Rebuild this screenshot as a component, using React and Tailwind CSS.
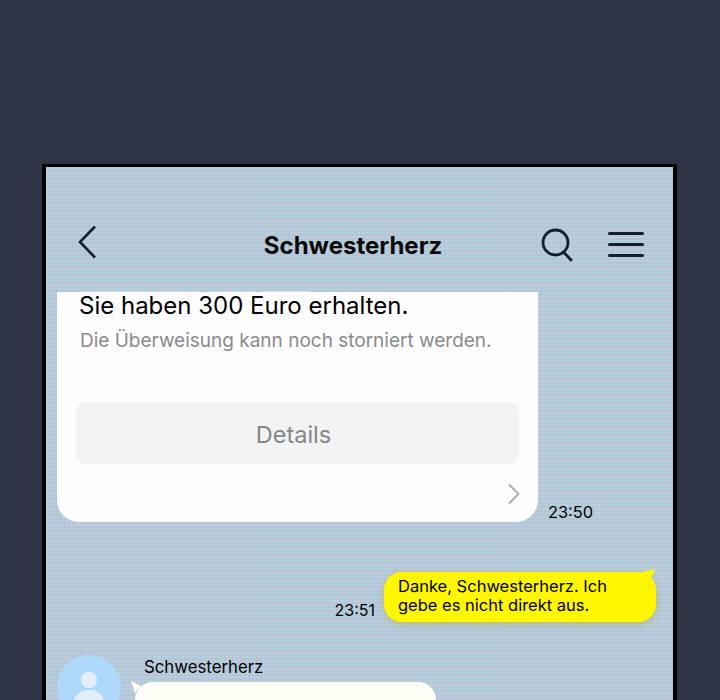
import { ChevronRight } from 'lucide-react'

const font = { fontFamily: 'Inter, "Noto Sans", sans-serif' }

function Header() {
  return (
    <div className="flex h-[125px] items-center pl-[31px] pr-[29px] pt-[30px] text-[#0a0a0a]">
      <svg className="-mt-[6px]" width="20" height="34" viewBox="0 0 20 34" fill="none" stroke="#16202a" strokeWidth="2.6">
        <path d="M18 1.5 L3 17 L18 32.5" />
      </svg>
      <h1 className="flex-1 pl-[68px] pt-[2px] text-center text-[24px] leading-none font-bold">Schwesterherz</h1>
      <svg width="32" height="34" viewBox="0 0 32 34" fill="none" stroke="#12202a" strokeWidth="2.8" strokeLinecap="round">
        <circle cx="14.5" cy="14.5" r="12.5" />
        <path d="M22.5 24 L30 32" />
      </svg>
      <div className="ml-[35px] flex w-[36px] flex-col gap-[8px]">
        <div className="h-[3px] rounded-full bg-[#12202a]" />
        <div className="h-[3px] rounded-full bg-[#12202a]" />
        <div className="h-[3px] rounded-full bg-[#12202a]" />
      </div>
    </div>
  )
}

function TransferCard() {
  return (
    <div className="relative flex items-end pl-[11px]">
      {/* cut-off line of text peeking above the card */}
      <div className="absolute -top-[1px] left-[34px] flex h-[1px] gap-[6px]">
        <div className="w-[120px] bg-white/30" />
        <div className="w-[50px] bg-white/30" />
        <div className="w-[48px] bg-white/50" />
      </div>
      <div className="h-[230px] w-[481px] rounded-b-[22px] bg-[#fdfcfe] px-[19px] text-black">
        <p className="-mt-px pl-[3px] text-[24px] leading-[30px]">Sie haben 300 Euro erhalten.</p>
        <p className="mt-[5px] pl-[4px] text-[19px] leading-[30px] text-[#8b8b8b]">Die Überweisung kann noch storniert werden.</p>
        <div className="mt-[46px] flex h-[62px] items-center justify-center rounded-[10px] bg-[#f4f3f4] pr-[8px] pt-[3px] text-[23.5px] text-[#858585]">
          Details
        </div>
        <div className="mt-[12px] flex justify-end">
          <ChevronRight size={36} strokeWidth={1.3} className="mr-[-13px] text-[#aeaeae]" />
        </div>
      </div>
      <span className="mb-[-1px] ml-[10px] text-[16.4px] leading-[22px] text-black">23:50</span>
    </div>
  )
}

function MyMessage() {
  return (
    <div className="mt-[50px] flex items-end justify-end pr-[17px]">
      <span className="mb-[1px] mr-[9px] text-[16px] leading-[22px] text-black">23:51</span>
      <div className="relative h-[50px] w-[272px] rounded-[18px] bg-[#fff700] px-[14px] pt-[5px] text-[16.5px] leading-[19px] text-black shadow-[0_2px_6px_rgba(190,180,60,0.6)]">
        <svg className="absolute -top-[3px] right-0" width="14" height="10" viewBox="0 0 14 10">
          <path d="M0 3 L13 0 L9 10 Z" fill="#fff700" />
        </svg>
        <p>Danke, Schwesterherz. Ich gebe es nicht direkt aus.</p>
      </div>
    </div>
  )
}

function OtherMessage() {
  return (
    <div className="mt-[33px] flex pl-[11px]">
      <div className="relative h-[64px] w-[64px] shrink-0 overflow-hidden rounded-full bg-[#aed9fb]">
        <div className="absolute left-[24px] top-[17px] h-[16px] w-[16px] rounded-full bg-[#e3eef8]" />
        <div className="absolute left-[16px] top-[35px] h-[30px] w-[32px] rounded-full bg-[#e3eef8]" />
      </div>
      <div className="ml-[23px] flex-1">
        <p className="text-[16.8px] leading-[24px] text-black">Schwesterherz</p>
        <div className="relative mt-[3px] ml-[-9px] h-[60px] w-[301px] rounded-[18px] bg-[#fefdf6]">
          <svg className="absolute -left-[4px] -top-px" width="10" height="12" viewBox="0 0 10 12">
            <path d="M0 0 L10 5 L4 12 Z" fill="#fefdf6" />
          </svg>
        </div>
      </div>
    </div>
  )
}

export default function App() {
  return (
    <div className="h-[700px] overflow-hidden bg-[#2e3346] pl-[42px] pr-[43px] pt-[164px]" style={font}>
      <div className="h-[600px] border-x-[4px] border-t-[3px] border-black bg-[#b6cad9] bg-[repeating-linear-gradient(90deg,rgba(255,255,255,0.03)_0px,rgba(255,255,255,0.03)_2px,rgba(120,130,160,0.03)_2px,rgba(120,130,160,0.03)_4px),repeating-linear-gradient(0deg,rgba(190,185,225,0.35)_0px,rgba(190,185,225,0.35)_2px,rgba(175,220,215,0.35)_2px,rgba(175,220,215,0.35)_4px)]">
        <Header />
        <TransferCard />
        <MyMessage />
        <OtherMessage />
      </div>
    </div>
  )
}
